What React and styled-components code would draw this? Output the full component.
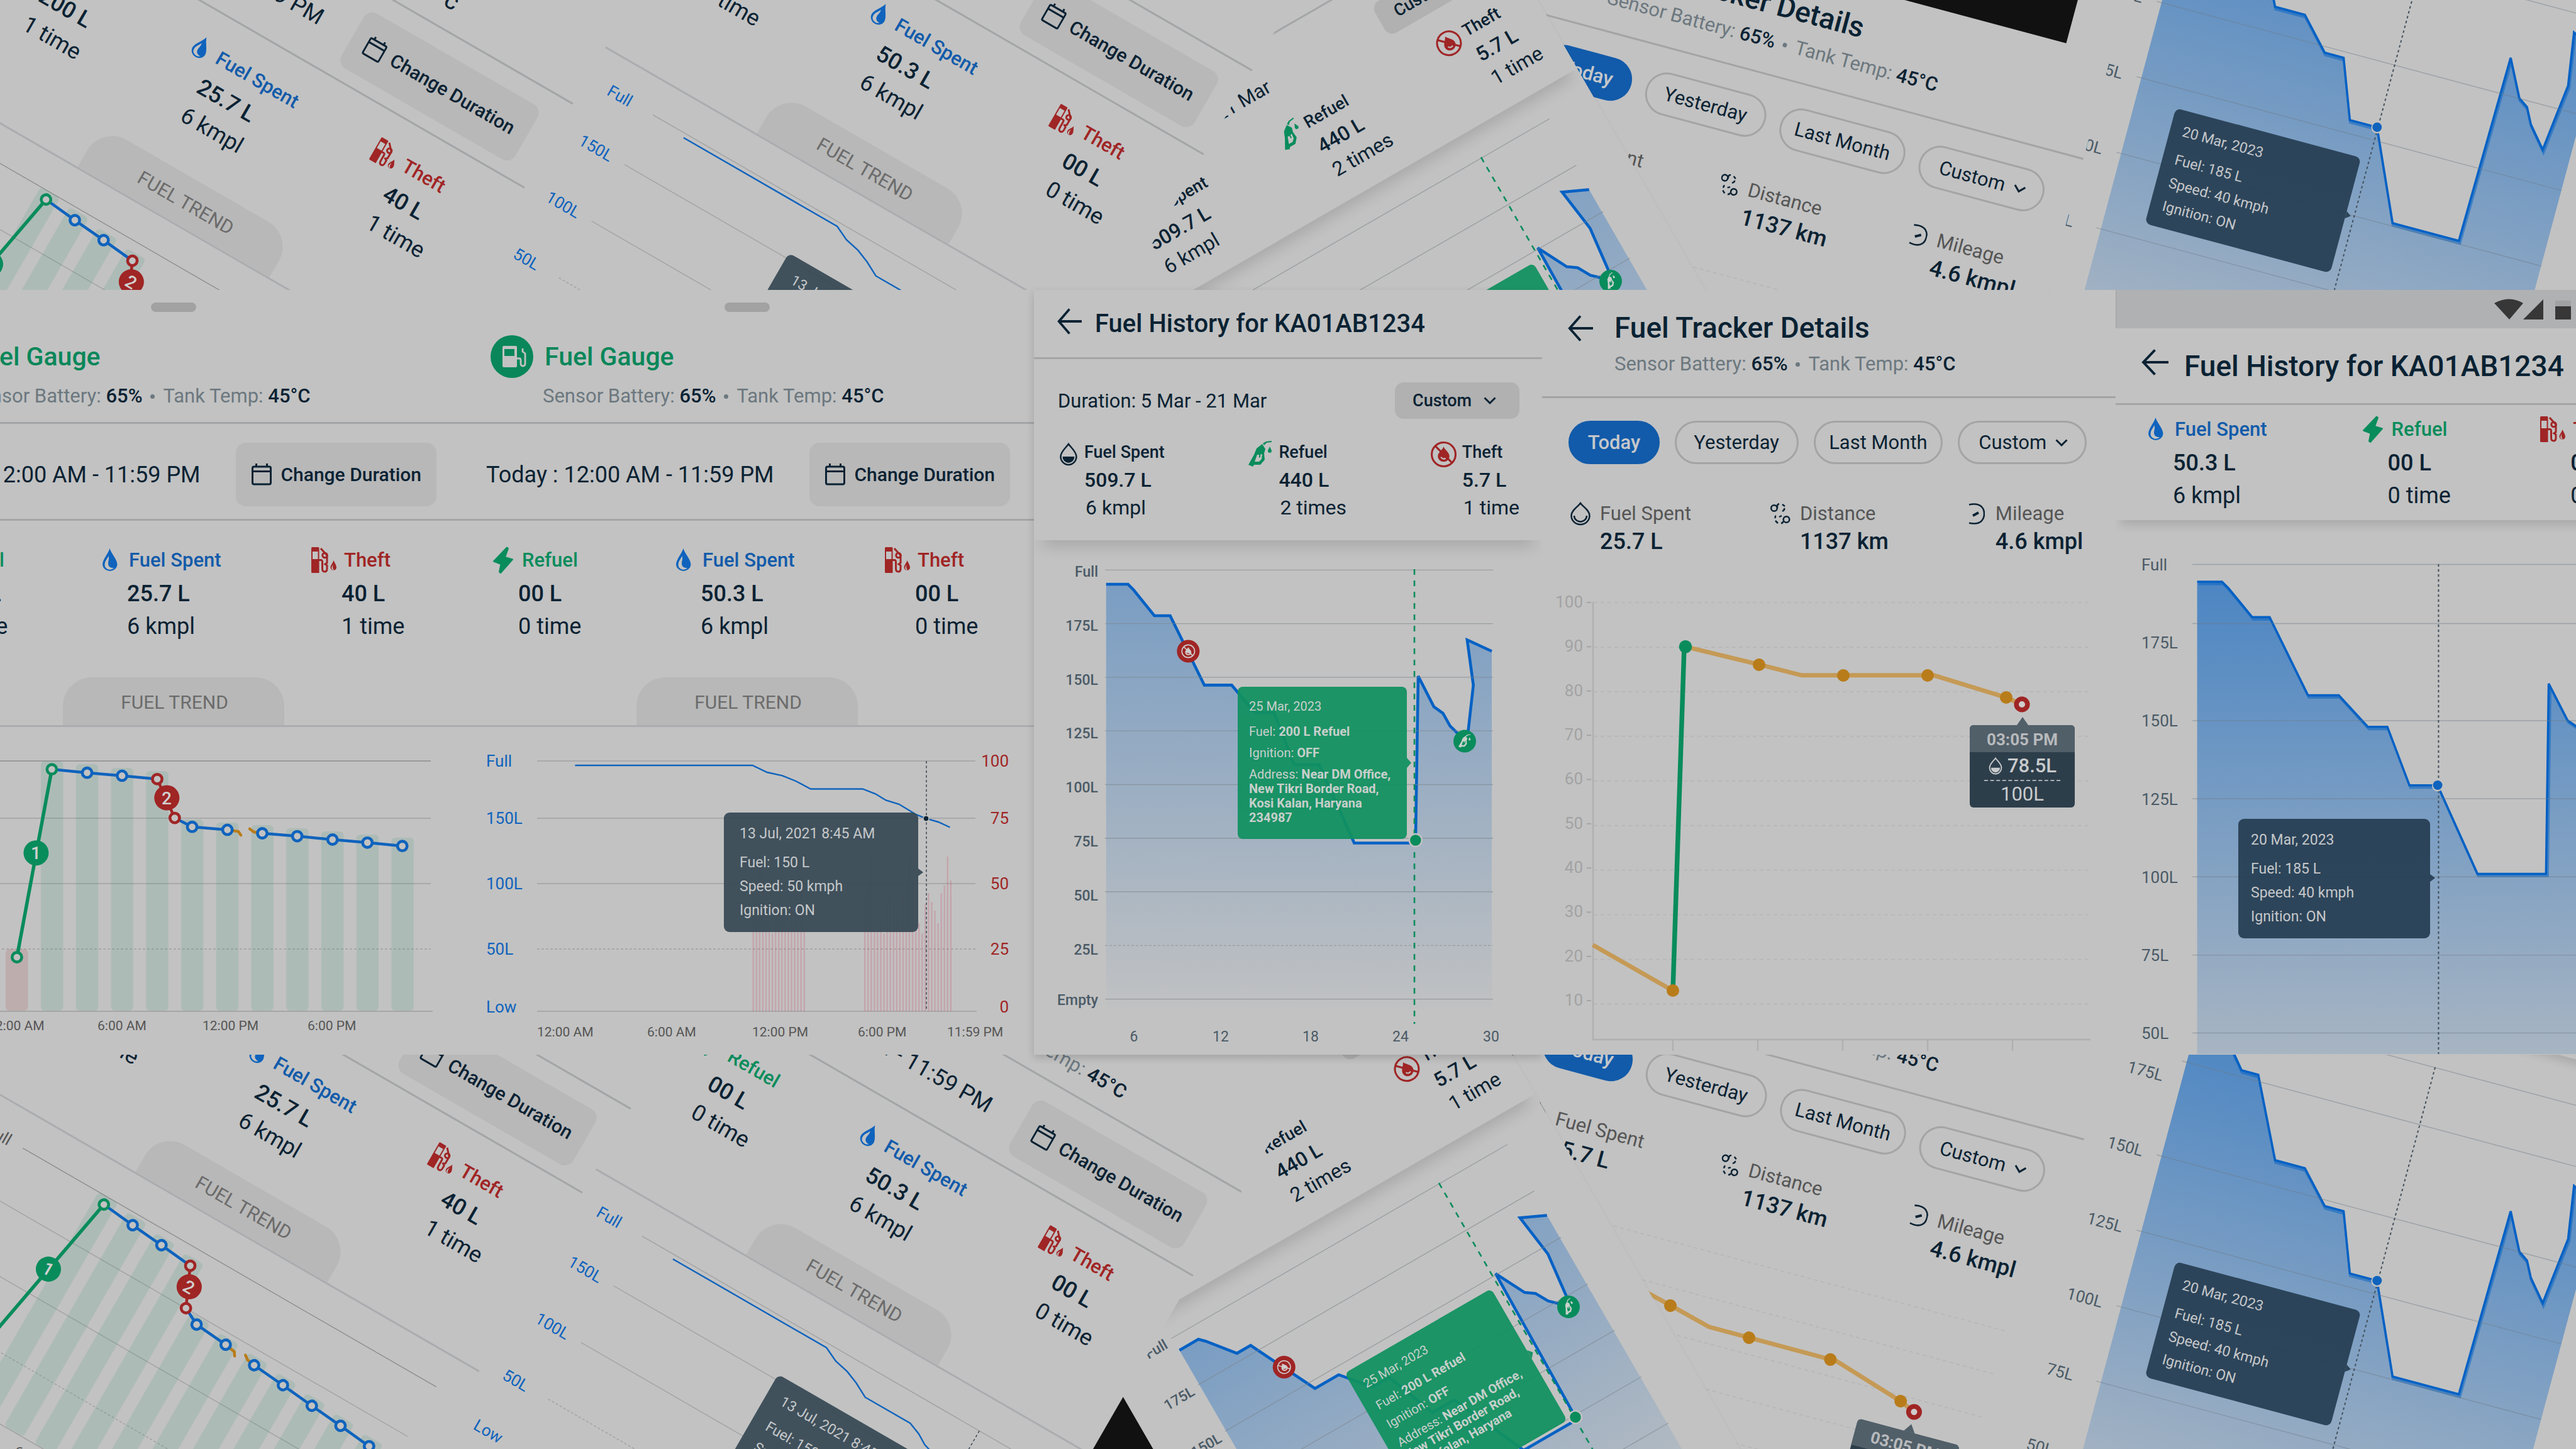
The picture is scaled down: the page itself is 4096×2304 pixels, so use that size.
import React from "react";
import styled, { createGlobalStyle, css } from "styled-components";

const c = {
  page: "#111111",
  card: "#c2c2c2",
  ink: "#0a2233",
  muted: "#6c787f",
  label: "#555555",
  blue: "#0f63bd",
  blueText: "#125baa",
  line: "#0461c4",
  green: "#098c5c",
  red: "#a02525",
  orange: "#b97c1a",
  axis: "#4a5a66",
  rule: "#a3a5a7",
};

const GlobalStyle = createGlobalStyle`
  * { box-sizing: border-box; }
  html, body { margin: 0; background: ${c.page}; }
  body {
    overflow: hidden;
    font-family: Roboto, "Liberation Sans", sans-serif;
    color: ${c.ink};
  }
  button, select {
    margin: 0;
    padding: 0;
    border: 0;
    background: none;
    color: inherit;
    font: inherit;
  }
  h2, p { margin: 0; font: inherit; }
  svg { display: block; flex: none; }
  svg text { font-family: Roboto, "Liberation Sans", sans-serif; }
`;

/* ---------- canvas ---------- */

const Board = styled.main`
  display: flex;
  flex-direction: column;
  width: 100%;
  min-height: 100vh;
  overflow: hidden;
  background: ${c.page};
`;

const Card = styled.article`
  display: flex;
  flex-direction: column;
  flex: none;
  width: ${(p) => (p.$narrow ? 808 : 912)}px;
  height: 1216px;
  overflow: hidden;
  background: ${c.card};
  ${(p) => p.$narrow && css`box-shadow: 0 0 5px rgba(0, 0, 0, 0.05);`}
`;

const Band = styled.section`
  position: relative;
  overflow: hidden;
  ${(p) => (p.$tall ? css`flex: 1;` : css`height: 461px; flex: none;`)}
`;

const Row = styled.section`
  position: relative;
  z-index: 1;
  display: flex;
  justify-content: center;
  flex: none;

  ${Card}:nth-child(3) { box-shadow: 0 5px 12px rgba(0, 0, 0, 0.16); }
`;

const Tilted = styled.div`
  position: absolute;
  left: ${(p) => p.$x}px;
  top: ${(p) => p.$y}px;
  transform-origin: 0 0;
  transform: rotate(${(p) => p.$angle}deg);
`;

/* ---------- shared parts ---------- */

const BackButton = styled.button`
  flex: none;
  padding-bottom: ${(p) => p.$lift || 0}px;
`;

const Title = styled.h2`
  font-size: ${(p) => p.$size}px;
  line-height: 50px;
  font-weight: 500;
  white-space: nowrap;
  color: ${(p) => p.$color || c.ink};
`;

const SensorLine = styled.p`
  display: flex;
  align-items: center;
  gap: 13px;
  font-size: 31px;
  line-height: 40px;
  white-space: nowrap;
  color: ${c.muted};

  b { font-weight: 500; color: ${c.ink}; }
  i { width: 7px; height: 7px; border-radius: 50%; background: ${c.muted}; }
`;

const Sensor = () => (
  <SensorLine>
    <span>Sensor Battery: <b>65%</b></span>
    <i />
    <span>Tank Temp: <b>45°C</b></span>
  </SensorLine>
);

const StatBox = styled.div`
  display: grid;
  grid-template-columns: ${(p) => p.$col}px auto;
  justify-content: start;
  white-space: nowrap;
`;
const StatIcon = styled.div`
  display: flex;
  align-items: center;
  height: ${(p) => p.$h || 46}px;
`;
const StatLabel = styled.div`
  font-size: ${(p) => p.$size || 31}px;
  line-height: ${(p) => p.$h || 46}px;
  font-weight: ${(p) => p.$weight || 500};
  color: ${(p) => p.$color || c.ink};
  padding-left: ${(p) => p.$inset || 0}px;
`;
const StatValue = styled.div`
  font-size: ${(p) => p.$size || 36}px;
  line-height: ${(p) => p.$h || 60}px;
  font-weight: 500;
`;
const StatNote = styled.div`
  font-size: ${(p) => p.$size || 36}px;
  line-height: 44px;
  padding-left: ${(p) => p.$inset || 0}px;
`;

const ChartBox = styled.div`
  position: relative;
  flex: 1;
`;

const Tip = styled.div`
  position: absolute;
  left: ${(p) => p.$x}px;
  top: ${(p) => p.$y}px;
  width: ${(p) => p.$w}px;
  padding: 15px ${(p) => p.$pad}px;
  border-radius: 9px;
  background: ${(p) => p.$bg};
  color: #c6c8ca;
  font-size: 23px;
  line-height: 38px;
  white-space: nowrap;

  p:first-child { margin-bottom: 8px; }
  &::after {
    content: "";
    position: absolute;
    left: 100%;
    top: ${(p) => p.$arrow}px;
    border: 6px solid transparent;
    border-left: 8px solid ${(p) => p.$bg};
    border-right: 0;
  }
`;

const RefuelTip = styled.div`
  position: absolute;
  left: 324px;
  top: 233px;
  display: flex;
  flex-direction: column;
  gap: 11px;
  width: 269px;
  padding: 20px 18px 22px;
  border-radius: 8px;
  background: rgba(17, 145, 96, 0.94);
  color: #c8cfcb;
  font-size: 20px;
  line-height: 23px;

  b { font-weight: 700; }
  p:first-child { margin-bottom: 6px; }
  &::after {
    content: "";
    position: absolute;
    left: 100%;
    top: 113px;
    border: 8px solid transparent;
    border-left: 7px solid rgba(17, 145, 96, 0.94);
    border-right: 0;
  }
`;

/* ---------- icons ---------- */

const BackArrow = ({ w }) => (
  <svg width={w} height="44" viewBox="0 0 42 44" preserveAspectRatio="none" fill="none" stroke={c.ink} strokeWidth="4">
    <path d="M42 22H4M21 2.500 3 22 21 41.500" />
  </svg>
);

const Chevron = () => (
  <svg width="20" height="14" viewBox="0 0 20 14" fill="none" stroke={c.ink} strokeWidth="3">
    <path d="M1.500 2.500 10 11l8.500-8.500" />
  </svg>
);

const Calendar = () => (
  <svg width="32" height="35" viewBox="0 0 32 35" fill="none" stroke={c.ink} strokeWidth="3">
    <rect x="1.500" y="5" width="29" height="28" rx="2.500" />
    <path d="M1.500 12.500h29M7.500 0v6M24.500 0v6" />
  </svg>
);

const Bolt = () => (
  <svg width="42" height="44" viewBox="-4 0 42 44" fill={c.green} stroke={c.green} strokeWidth="2" strokeLinejoin="round">
    <path d="M22 1.500 24 3 19 17l12 3.500L12 42l-2-1.500L12.500 28 1 23.500Z" />
  </svg>
);

const Drop = () => (
  <svg width="30" height="38" viewBox="-3 0 30 38" fill={c.blue}>
    <path
      fillRule="evenodd"
      d="M11.500 0C14 9 23.500 17 23.500 26a11.800 11 0 0 1-23.500 0C0 17 9 9 11.500 0ZM9.500 12C8 16.500 3.500 20 3.500 26a8.200 7.500 0 0 0 14.500 5c-5 .5-9-2-9-7 0-4 2-7 .5-12Z"
    />
  </svg>
);

const PumpLeak = () => (
  <svg width="43" height="42" viewBox="-3 0 43 42" fill={c.red}>
    <path fillRule="evenodd" d="M1.500 0H11a1.500 1.500 0 0 1 1.500 1.500V41H1.500A1.500 1.500 0 0 1 0 39.500v-38A1.500 1.500 0 0 1 1.500 0ZM2 7v12h8.500V7Z" />
    <g fill="none" stroke={c.red} strokeWidth="3">
      <path d="M12 20.500h3.500q2 0 2 3V34q0 5 3.800 5T25 34v-5l-3-2 3-2V13L15 2" />
      <circle cx="21.500" cy="13" r="3.700" />
    </g>
    <path fillRule="evenodd" d="M35.500 21c2 5 4.500 7.500 4.500 11.500a4.800 5 0 0 1-9.500 0c0-4 3.500-6.500 5-11.500ZM34.500 28c-2 3-2.500 4-2 6.500.5 1.500 2 2 3.500 1.500-2-1.500-2.500-4-1.500-8Z" />
  </svg>
);

const PumpDisc = () => (
  <svg width="68" height="68" viewBox="0 0 68 68">
    <circle cx="34" cy="34" r="34" fill="#09875a" />
    <path fill={c.card} fillRule="evenodd" d="M21 17h19q2 0 2 2v30q0 2-2 2H21q-2 0-2-2V19q0-2 2-2Zm1 5v11h16V22Z" />
    <path d="M42 37h4q2 0 2 3v5q0 4 3.500 4T55 45V29l-4-3v-5" fill="none" stroke={c.card} strokeWidth="2.800" strokeLinejoin="round" />
  </svg>
);

const HalfDrop = ({ color = c.ink, w = 28, h = 37 }) => (
  <svg width={w} height={h} viewBox="0 0 28 37" fill="none" stroke={color} strokeWidth="2.500">
    <path d="M14 2C10 8 1.500 14 1.500 22a12.500 13 0 0 0 25 0C26.500 14 18 8 14 2Z" />
    <path d="M4.500 22h19a9.500 10 0 0 1-19 0Z" fill={color} stroke="none" />
  </svg>
);

const SmileDrop = () => (
  <svg width="32" height="38" viewBox="0 0 32 38" fill="none" stroke={c.ink} strokeWidth="2.500">
    <path d="M16 2C12 8 1.500 13 1.500 22a14.500 14 0 0 0 29 0C30.500 13 20 8 16 2Z" />
    <path d="M6 22a10 9.500 0 0 0 20 0" />
  </svg>
);

const nozzle = (
  <>
    <path fillRule="evenodd" d="M0 38 9 22l4-10 9-7 5 8-2 7 1 10-7 8H9l-2 3ZM14 22l-4 11h7l4-4 1-8-3 1v4l-2 1v-5Z" />
    <path d="m23 4 5-3 9-1v2l-8 1-4 4ZM34 9c1 3 3 5 3 7a3 3 0 0 1-6 0c0-2 2-4 3-7Z" />
  </>
);

const Nozzle = () => (
  <svg width="38" height="42" viewBox="0 0 38 42" fill={c.green}>{nozzle}</svg>
);

const noFuel = (color, back) => (
  <>
    <circle cx="20" cy="20" r="18.500" fill="none" stroke={color} strokeWidth="3" />
    <path d="m7 7 26 26" stroke={color} strokeWidth="3" />
    <path d="M20 8c2 5 9 9 9 15a9 8.500 0 0 1-18 0c0-6 7-10 9-15Z" fill={color} />
    <path d="M16 24a4.500 4.500 0 0 0 7 2" fill="none" stroke={back} strokeWidth="2" />
  </>
);

const NoFuel = () => (
  <svg width="41" height="41" viewBox="0 0 40 40">{noFuel(c.red, c.card)}</svg>
);

const Route = () => (
  <svg width="32" height="34" viewBox="0 0 32 34" fill="none" stroke={c.ink} strokeWidth="2.500">
    <circle cx="6" cy="8" r="4.800" />
    <path d="M11 8V4q0-2 3-3M19 2l4 3M22 8q1 3-3 5M18 20l-4 2M9 20q-2 1-1 4M8 28l4 4M17 32q3 0 3-3" />
    <circle cx="25.500" cy="26" r="4.800" />
  </svg>
);

const Gauge = () => (
  <svg width="30" height="34" viewBox="-5 0 30 34" fill="none" stroke={c.ink} strokeWidth="2.600">
    <path d="M0 2.500q4-1 8-1c10 0 16 6 16 15.500S18 32.500 8 32.500q-4 0-8-1" />
    <path d="m6 20 9-5" strokeWidth="4" />
  </svg>
);

/* ---------- stats ---------- */

const kinds = {
  refuel: { label: "Refuel", color: c.green, col: 44, inset: 6, icon: <Bolt /> },
  spent: { label: "Fuel Spent", color: c.blueText, col: 42, inset: 3, icon: <Drop /> },
  theft: { label: "Theft", color: c.red, col: 51, inset: 4, icon: <PumpLeak /> },
};

function Stat({ kind, value, note }) {
  const k = kinds[kind];
  return (
    <StatBox $col={k.col}>
      <StatIcon>{k.icon}</StatIcon>
      <div>
        <StatLabel $color={k.color} $inset={k.inset}>{k.label}</StatLabel>
        <StatValue>{value}</StatValue>
        <StatNote>{note}</StatNote>
      </div>
    </StatBox>
  );
}

/* ---------- fuel gauge cards ---------- */

const Handle = styled.div`
  width: 72px;
  height: 15px;
  margin: 20px auto 37px;
  border-radius: 8px;
  background: #a2a2a2;
  flex: none;
`;
const GaugeHead = styled.header`
  padding: 0 48px 21px;
  border-bottom: 3px solid ${c.rule};

  ${SensorLine} { margin: 9px 0 0 83px; }
`;
const GaugeTitle = styled.div`
  display: flex;
  align-items: center;
  gap: 18px;
`;
const DurationRow = styled.div`
  display: flex;
  align-items: center;
  justify-content: space-between;
  padding: 30px 38px 20px 41px;
  border-bottom: 3px solid ${c.rule};
  font-size: 36px;
  white-space: nowrap;
`;
const ChangeButton = styled.button`
  display: flex;
  align-items: center;
  gap: 14px;
  height: 101px;
  padding: 0 24px 0 25px;
  border-radius: 16px;
  background: #b8b8b8;
  font-size: 30px;
  font-weight: 500;
`;
const GaugeStats = styled.div`
  display: grid;
  grid-template-columns: 292fr 332fr 240fr;
  padding: 40px 0 59px 48px;
`;
const TabRow = styled.div`
  display: flex;
  justify-content: center;
  border-bottom: 3px solid #abacaf;
`;
const Tab = styled.button`
  width: 352px;
  height: 76px;
  padding: 3px 0 0 3px;
  border-radius: 46px 46px 0 0;
  background: #b8b8b8;
  color: #6b6b6b;
  font-size: 30px;
`;

const gridY = [749, 840, 944, 1048];

function GaugeCard({ stats, children }) {
  return (
    <Card>
      <Handle />
      <GaugeHead>
        <GaugeTitle>
          <PumpDisc />
          <Title $size={41} $color="#09875a">Fuel Gauge</Title>
        </GaugeTitle>
        <Sensor />
      </GaugeHead>
      <DurationRow>
        <span>Today : 12:00 AM - 11:59 PM</span>
        <ChangeButton type="button"><Calendar />Change Duration</ChangeButton>
      </DurationRow>
      <GaugeStats>{stats.map((s) => <Stat key={s.kind} {...s} />)}</GaugeStats>
      <TabRow><Tab type="button">FUEL TREND</Tab></TabRow>
      <ChartBox>{children}</ChartBox>
    </Card>
  );
}

const barTops = [749, 754, 760, 765, 842, 847, 851, 856, 861, 866, 871];
const points = [
  [318.500, 767.700], [374, 772.400], [485.500, 853.700], [541.600, 858.400], [597, 864],
  [652.600, 868.600], [708.700, 874], [764.200, 878.800], [819.700, 884.200],
];

function EventsCard() {
  return (
    <GaugeCard
      stats={[
        { kind: "refuel", value: "200 L", note: "1 time" },
        { kind: "spent", value: "25.7 L", note: "6 kmpl" },
        { kind: "theft", value: "40 L", note: "1 time" },
      ]}
    >
      <svg width="912" height="521" viewBox="0 695 912 521">
        <g stroke="#9c9c9c" strokeWidth="1.300">
          {gridY.map((y, i) => (
            <path key={y} d={`M106 ${y}H865`} stroke={i ? "#a0a0a0" : "#8c8c8c"} strokeDasharray={i === 3 ? "4 3" : "none"} />
          ))}
          <path d="M106 1147H868" />
        </g>
        {barTops.map((y, i) => (
          <rect key={i} x={245 + i * 55.730} y={y} width="35.500" height={1146 - y} rx="6" fill="#098c5c" opacity="0.110" />
        ))}
        <rect x="189" y="1048" width="35.500" height="98" rx="6" fill="#a02525" opacity="0.130" />
        <g fill="none" strokeWidth="4.500">
          <path stroke={c.orange} d="M541 858.400 559 861l4 6M577 857l7 5 13 2" strokeLinecap="round" />
          <path stroke={c.blue} d="M262.400 762.200 318.500 767.700 374 772.400 430 777.800M457.800 839.600 485.500 853.700 541.600 858.400M597 864 652.600 868.600 708.700 874 764.200 878.800 819.700 884.200" />
          <path stroke={c.red} d="M430 777.800 457.800 839.600" />
          <path stroke={c.green} strokeWidth="5.500" d="M206.900 1061 262.400 762.200" />
        </g>
        <g fill={c.card} strokeWidth="4.600">
          {points.map(([x, y]) => <circle key={x} cx={x} cy={y} r="7.600" stroke={c.blue} />)}
          <circle cx="430" cy="777.800" r="7.600" stroke={c.red} />
          <circle cx="457.800" cy="839.600" r="7.600" stroke={c.red} />
          <circle cx="262.400" cy="762.200" r="7.600" stroke={c.green} />
          <circle cx="206.900" cy="1061" r="7.600" stroke={c.green} />
        </g>
        <circle cx="237.400" cy="895.200" r="20" fill={c.green} />
        <circle cx="445.300" cy="807.600" r="20" fill={c.red} />
        <g fill="#d0d0d0" fontSize="28" fontWeight="500" textAnchor="middle">
          <text x="237" y="905">1</text>
          <text x="445" y="818">2</text>
        </g>
        <g fontSize="26" fill={c.label}>
          <text x="42" y="758">Full</text>
          <text x="42" y="849">150L</text>
          <text x="42" y="953">100L</text>
          <text x="42" y="1057">50L</text>
          <text x="42" y="1149">Low</text>
        </g>
        <g fontSize="21" fill={c.label}>
          <text x="161" y="1177">12:00 AM</text>
          <text x="335" y="1177">6:00 AM</text>
          <text x="502" y="1177">12:00 PM</text>
          <text x="669" y="1177">6:00 PM</text>
        </g>
      </svg>
    </GaugeCard>
  );
}

const cycle = [188, 200, 246, 208, 188, 140, 124, 170, 188, 174, 160, 140];

function UsageCard() {
  return (
    <GaugeCard
      stats={[
        { kind: "refuel", value: "00 L", note: "0 time" },
        { kind: "spent", value: "50.3 L", note: "6 kmpl" },
        { kind: "theft", value: "00 L", note: "0 time" },
      ]}
    >
      <svg width="912" height="521" viewBox="0 695 912 521">
        <g stroke="#a0a0a0" strokeWidth="1.300">
          {gridY.map((y, i) => (
            <path key={y} d={`M122 ${y}H819`} strokeDasharray={i === 3 ? "4 3" : "none"} />
          ))}
          <path d="M122 1147H821" />
        </g>
        <g fill="#d0305a" opacity="0.200">
          {Array.from({ length: 17 }, (_, i) => (
            <rect key={i} x={464.600 + i * 5.060} y={1147 - (i > 15 ? 140 : cycle[i % 12])} width="2.400" height={i > 15 ? 140 : cycle[i % 12]} />
          ))}
          {Array.from({ length: 28 }, (_, i) => (
            <rect key={i} x={642 + i * 5.060} y={1147 - cycle[i % 12]} width="2.400" height={cycle[i % 12]} />
          ))}
        </g>
        <path
          d="M182.400 756H464.500L487.700 767 512 772.400 533.400 781 557 793.500H639.700L660 801.300 676.700 811.500 697.600 817.800 724.700 834.200 740.300 840.400 760 846 778.500 854.500"
          fill="none" stroke={c.blue} strokeWidth="2.400"
        />
        <path d="M741 749V1145" stroke="#3c4955" strokeWidth="1.500" strokeDasharray="4 3.500" />
        <circle cx="740.500" cy="840.500" r="4.500" fill={c.ink} stroke={c.card} strokeWidth="1.500" />
        <g fontSize="26" fill={c.blue}>
          <text x="41" y="758">Full</text>
          <text x="41" y="849">150L</text>
          <text x="41" y="953">100L</text>
          <text x="41" y="1057">50L</text>
          <text x="41" y="1149">Low</text>
        </g>
        <g fontSize="26" fill={c.red} textAnchor="end">
          <text x="872" y="758">100</text>
          <text x="872" y="849">75</text>
          <text x="872" y="953">50</text>
          <text x="872" y="1057">25</text>
          <text x="872" y="1149">0</text>
        </g>
        <g fontSize="21" fill={c.label}>
          <text x="122" y="1187">12:00 AM</text>
          <text x="297" y="1187">6:00 AM</text>
          <text x="464" y="1187">12:00 PM</text>
          <text x="632" y="1187">6:00 PM</text>
          <text x="774" y="1187">11:59 PM</text>
        </g>
      </svg>
      <Tip $x={419} $y={136} $w={309} $pad={25} $arrow={89} $bg="rgba(55, 73, 85, 0.94)">
        <p>13 Jul, 2021 8:45 AM</p>
        <p>Fuel: 150 L</p>
        <p>Speed: 50 kmph</p>
        <p>Ignition: ON</p>
      </Tip>
    </GaugeCard>
  );
}

/* ---------- fuel history, custom duration ---------- */

const TitleBar = styled.header`
  display: flex;
  align-items: center;
  height: ${(p) => p.$h}px;
  padding-left: ${(p) => p.$left}px;
  gap: ${(p) => p.$gap}px;
  border-bottom: 3px solid ${c.rule};
  flex: none;
`;
const HistoryPanel = styled.div`
  position: relative;
  padding: 37px 36px 30px 38px;
  background: ${c.card};
  box-shadow: 0 24px 22px -14px rgba(0, 0, 0, 0.13);
`;
const HistoryRow = styled.div`
  display: flex;
  align-items: center;
  justify-content: space-between;
  margin-bottom: 31px;
  font-size: 31px;
  white-space: nowrap;
`;
const HistoryStats = styled.div`
  display: flex;
  justify-content: space-between;
  padding-left: 3px;
`;
const Picker = styled.div`
  display: grid;
  align-items: center;
  justify-items: end;
  height: ${(p) => p.$h}px;
  width: ${(p) => p.$w || "auto"};
  border: ${(p) => (p.$outline ? "3px solid #a4a4a4" : "0")};
  border-radius: ${(p) => p.$radius}px;
  background: ${(p) => (p.$outline ? "none" : "#b1b1b1")};
  padding-right: ${(p) => (p.$outline ? 27 : 37)}px;

  select {
    grid-area: 1 / 1;
    justify-self: stretch;
    height: 100%;
    padding-left: ${(p) => (p.$outline ? 30 : 28)}px;
    appearance: none;
    outline: none;
    font-size: ${(p) => (p.$outline ? 31 : 27)}px;
    font-weight: ${(p) => (p.$outline ? 400 : 500)};
  }
  svg { grid-area: 1 / 1; pointer-events: none; }
`;

const CustomPicker = (props) => (
  <Picker {...props}>
    <select aria-label="Duration" defaultValue="custom">
      <option value="custom">Custom</option>
    </select>
    <Chevron />
  </Picker>
);

function HistoryStat({ icon, col, label, value, note }) {
  return (
    <StatBox $col={col}>
      <StatIcon $h={50}>{icon}</StatIcon>
      <div>
        <StatLabel $size={27} $h={44}>{label}</StatLabel>
        <StatValue $size={32} $h={44}>{value}</StatValue>
        <StatNote $size={32} $inset={2}>{note}</StatNote>
      </div>
    </StatBox>
  );
}

const historyLine =
  "M114.800 468H149.600L158.300 476.700 191.500 518H216.600L271 628.400H314.500L351.500 672.300H382L413.600 755H453.800L509.300 879.500H606.800L611 614 636 662.900 650.300 673 661.700 693.400 685 716 690 705.900 698.700 628.400 688.900 556.500 728 574.500";
const historyLabels = [
  ["Full", 456], ["175L", 542], ["150L", 628], ["125L", 713], ["100L", 799],
  ["75L", 885], ["50L", 971], ["25L", 1057], ["Empty", 1137],
];

function HistoryCard({ id }) {
  return (
    <Card $narrow>
      <TitleBar $h={110} $left={37} $gap={21}>
        <BackButton type="button" aria-label="Back" $lift={8}><BackArrow w={39} /></BackButton>
        <Title $size={40}>Fuel History for KA01AB1234</Title>
      </TitleBar>
      <HistoryPanel>
        <HistoryRow>
          <span>Duration: 5 Mar - 21 Mar</span>
          <CustomPicker $h={58} $w="198px" $radius={14} />
        </HistoryRow>
        <HistoryStats>
          <HistoryStat icon={<HalfDrop />} col={39} label="Fuel Spent" value="509.7 L" note="6 kmpl" />
          <HistoryStat icon={<Nozzle />} col={48} label="Refuel" value="440 L" note="2 times" />
          <HistoryStat icon={<NoFuel />} col={50} label="Theft" value="5.7 L" note="1 time" />
        </HistoryStats>
      </HistoryPanel>
      <ChartBox>
        <svg width="808" height="817" viewBox="0 398 808 817">
          <defs>
            <linearGradient id={`history-${id}`} x1="0" y1="468" x2="0" y2="1143" gradientUnits="userSpaceOnUse">
              <stop offset="0" stopColor={c.line} stopOpacity="0.380" />
              <stop offset="1" stopColor={c.line} stopOpacity="0.010" />
            </linearGradient>
          </defs>
          <path d={`${historyLine}V1143H114.800Z`} fill={`url(#history-${id})`} />
          <path d={historyLine} fill="none" stroke={c.line} strokeWidth="4.600" />
          <g stroke="#7d858c" strokeOpacity="0.600" strokeWidth="1.300">
            {historyLabels.map(([t], i) => (
              <path key={t} d={`M113 ${445.400 + i * 85.270}H730`} strokeDasharray={i === 7 ? "4 3" : "none"} />
            ))}
          </g>
          <path d="M605 444V1167" stroke={c.green} strokeWidth="2.600" strokeDasharray="9 9" />
          <circle cx="606.800" cy="875" r="10" fill={c.green} stroke={c.card} strokeWidth="2.500" />
          <circle cx="245.400" cy="574.500" r="18" fill={c.red} />
          <g transform="translate(234.400 563.500) scale(0.550)">{noFuel("#d0cccc", c.red)}</g>
          <circle cx="685" cy="717.600" r="18" fill={c.green} />
          <g transform="translate(675 706.500) scale(0.520)" fill="#c8d2cd">{nozzle}</g>
          <g fontSize="23" fontWeight="500" fill={c.axis} textAnchor="end">
            {historyLabels.map(([t, y]) => <text key={t} x="102" y={y}>{t}</text>)}
          </g>
          <g fontSize="23" fill={c.axis} textAnchor="middle">
            <text x="159" y="1195">6</text>
            <text x="297" y="1195">12</text>
            <text x="440" y="1195">18</text>
            <text x="583" y="1195">24</text>
            <text x="727" y="1195">30</text>
          </g>
        </svg>
        <RefuelTip>
          <p>25 Mar, 2023</p>
          <p>Fuel: <b>200 L Refuel</b></p>
          <p>Ignition: <b>OFF</b></p>
          <p>Address: <b>Near DM Office, New Tikri Border Road, Kosi Kalan, Haryana 234987</b></p>
        </RefuelTip>
      </ChartBox>
    </Card>
  );
}

/* ---------- fuel tracker details ---------- */

const TrackerHead = styled.header`
  display: flex;
  align-items: flex-start;
  gap: 34px;
  padding: 35px 41px 31px;
  border-bottom: 3px solid #a4a4a4;

  ${BackButton} { padding-top: 4px; }
  ${SensorLine} { margin-top: 13px; }
`;
const Pills = styled.div`
  display: grid;
  grid-template-columns: 145fr 197fr 206fr 205fr;
  gap: 24px;
  padding: 36px 46px 57px 42px;
`;
const Pill = styled.button`
  height: 69px;
  border-radius: 35px;
  border: 3px solid ${(p) => (p.$active ? "#125baa" : "#a4a4a4")};
  background: ${(p) => (p.$active ? "#125baa" : "none")};
  color: ${(p) => (p.$active ? "#c6c8ca" : c.ink)};
  font-size: 31px;
  font-weight: ${(p) => (p.$active ? 500 : 400)};
  white-space: nowrap;
`;
const TrackerStats = styled.div`
  display: grid;
  grid-template-columns: 319fr 312fr 239fr;
  padding: 0 0 18px 45px;
`;
const LevelTip = styled.div`
  position: absolute;
  left: 680px;
  top: 252px;
  width: 167px;
  border-radius: 6px;
  background: #2d3e4b;
  color: #c8cacc;
  text-align: center;
  font-size: 31px;

  &::before {
    content: "";
    position: absolute;
    left: 75px;
    bottom: 100%;
    border: 9px solid transparent;
    border-bottom: 13px solid #515f69;
    border-top: 0;
  }
`;
const LevelTime = styled.div`
  padding-top: 3px;
  border-radius: 6px 6px 0 0;
  background: #515f69;
  color: #b8babc;
  font-size: 26px;
  line-height: 40px;
  font-weight: 700;
`;
const LevelNow = styled.div`
  display: flex;
  align-items: center;
  justify-content: center;
  gap: 7px;
  margin: 0 23px;
  border-bottom: 2px dashed #a9adb0;
  line-height: 44px;
  font-weight: 500;
`;
const LevelMax = styled.div`
  line-height: 42px;
`;

function TrackerStat({ icon, label, value }) {
  return (
    <StatBox $col={47}>
      <StatIcon $h={44}>{icon}</StatIcon>
      <div>
        <StatLabel $h={44} $weight={400} $color={c.label}>{label}</StatLabel>
        <StatValue $h={44}>{value}</StatValue>
      </div>
    </StatBox>
  );
}

const levels = [100, 90, 80, 70, 60, 50, 40, 30, 20, 10];

function TrackerCard() {
  return (
    <Card>
      <TrackerHead>
        <BackButton type="button" aria-label="Back"><BackArrow w={40} /></BackButton>
        <div>
          <Title $size={46}>Fuel Tracker Details</Title>
          <Sensor />
        </div>
      </TrackerHead>
      <Pills>
        <Pill type="button" $active>Today</Pill>
        <Pill type="button">Yesterday</Pill>
        <Pill type="button">Last Month</Pill>
        <CustomPicker $h={69} $radius={35} $outline />
      </Pills>
      <TrackerStats>
        <TrackerStat icon={<SmileDrop />} label="Fuel Spent" value="25.7 L" />
        <TrackerStat icon={<Route />} label="Distance" value="1137 km" />
        <TrackerStat icon={<Gauge />} label="Mileage" value="4.6 kmpl" />
      </TrackerStats>
      <ChartBox>
        <svg width="912" height="776" viewBox="0 440 912 776">
          <g stroke="#b8b8b8" strokeWidth="2" strokeDasharray="6 5">
            {levels.map((n, i) => <path key={n} d={`M82 ${497 + i * 70.930}H872`} />)}
          </g>
          <g stroke="#b0b0b0" strokeWidth="2.500">
            <path d="M81 496V1192H872" fill="none" />
            {[208, 343, 478, 613, 748].map((x) => <path key={x} d={`M${x} 1192V1210`} />)}
          </g>
          <g stroke="#a4a4a4" strokeWidth="2">
            {levels.map((n, i) => <path key={n} d={`M71 ${497 + i * 70.350}H78`} />)}
          </g>
          <g fontSize="26" fill="#a2a2a2" textAnchor="end">
            {levels.map((n, i) => <text key={n} x="65" y={Math.round(505 + i * 70.350)}>{n}</text>)}
          </g>
          <g fill="none" stroke="#c59a56" strokeWidth="7">
            <path d="M80.700 1041.500 208 1114.200" />
            <path d="M228.200 567.400 345.200 595.600 413 612.800H623L737.600 648 763 659" />
          </g>
          <path d="M208 1114 226 568" stroke={c.green} strokeWidth="7.500" />
          <g fill={c.orange}>
            {[[208, 1114], [345, 596], [479, 613], [613, 613], [738, 648]].map(([x, y]) => <circle key={x} cx={x} cy={y} r="10" />)}
          </g>
          <circle cx="228" cy="567.400" r="10.300" fill={c.green} />
          <circle cx="763" cy="659" r="8.800" fill="#d0cccc" stroke={c.red} strokeWidth="7.500" />
        </svg>
        <LevelTip>
          <LevelTime>03:05 PM</LevelTime>
          <LevelNow><HalfDrop color="#c8cacc" w={24} h={28} />78.5L</LevelNow>
          <LevelMax>100L</LevelMax>
        </LevelTip>
      </ChartBox>
    </Card>
  );
}

/* ---------- fuel history, live ---------- */

const StatusBar = styled.div`
  display: flex;
  justify-content: flex-end;
  align-items: center;
  height: 61px;
  padding-right: 188px;
  border-left: 1px solid #a0a0a0;
  background: #b0b1b3;
  flex: none;
`;
const LivePanel = styled.div`
  position: relative;
  padding: 16px 0 17px 49px;
  display: grid;
  grid-template-columns: 340fr 284fr 240fr;
  background: ${c.card};
  box-shadow: 0 16px 14px -8px rgba(0, 0, 0, 0.12);
`;

const liveLine =
  "M129.600 465H169.100L179.100 475 217.200 521.300H244.800L305.800 645.600H354.800L401 695.700H432L467.200 788.800H512L575.300 929.600H684.400L688.600 627 718.600 685.500 734 696 747 721 775.600 755 788.300 646 775.500 562 821 584";

function LiveCard({ id }) {
  return (
    <Card>
      <StatusBar>
        <svg width="122" height="34" viewBox="0 0 122 34" fill="#373737">
          <path d="M0 7Q24-6 46 7L24 33ZM78 1V33H46Z" />
          <path d="M97 12h25v21H97Z" />
          <path d="M97 3h25v9H97Z" opacity="0.120" />
        </svg>
      </StatusBar>
      <TitleBar $h={122} $left={41} $gap={25}>
        <BackButton type="button" aria-label="Back" $lift={12}><BackArrow w={43} /></BackButton>
        <Title $size={46}>Fuel History for KA01AB1234</Title>
      </TitleBar>
      <LivePanel>
        <Stat kind="spent" value="50.3 L" note="6 kmpl" />
        <Stat kind="refuel" value="00 L" note="0 time" />
        <Stat kind="theft" value="00 L" note="0 time" />
      </LivePanel>
      <ChartBox>
        <svg width="912" height="849" viewBox="0 367 912 849">
          <defs>
            <linearGradient id={`live-${id}`} x1="0" y1="465" x2="0" y2="1216" gradientUnits="userSpaceOnUse">
              <stop offset="0" stopColor={c.line} stopOpacity="0.620" />
              <stop offset="1" stopColor={c.line} stopOpacity="0.140" />
            </linearGradient>
            <clipPath id={`live-area-${id}`}><path d={`${liveLine}V1216H129.600Z`} /></clipPath>
          </defs>
          <path d={`${liveLine}V1216H129.600Z`} fill={`url(#live-${id})`} />
          <g clipPath={`url(#live-area-${id})`}>
            <path d={liveLine} transform="translate(2 3)" fill="none" stroke={c.line} strokeOpacity="0.500" strokeWidth="5" />
          </g>
          <path d={liveLine} fill="none" stroke={c.line} strokeWidth="3.600" />
          <g stroke="#6f7b86" strokeOpacity="0.450" strokeWidth="1.400">
            {[437.500, 531.500, 686, 810, 934.300, 1058.600, 1182.500].map((y) => <path key={y} d={`M122 ${y}H821`} />)}
          </g>
          <path d="M513.400 437V1216" stroke="#44525e" strokeWidth="2" strokeDasharray="4 4" />
          <circle cx="512" cy="789.500" r="9" fill={c.card} />
          <circle cx="512" cy="788.500" r="7.500" fill={c.blue} />
          <g fontSize="26" fill={c.axis}>
            {["Full", "175L", "150L", "125L", "100L", "75L", "50L"].map((t, i) => (
              <text key={t} x="41" y={Math.round(447 + i * 124.200)}>{t}</text>
            ))}
          </g>
        </svg>
        <Tip $x={195} $y={475} $w={305} $pad={20} $arrow={88} $bg="rgba(38, 61, 82, 0.93)">
          <p>20 Mar, 2023</p>
          <p>Fuel: 185 L</p>
          <p>Speed: 40 kmph</p>
          <p>Ignition: ON</p>
        </Tip>
      </ChartBox>
    </Card>
  );
}

/* ---------- board ---------- */

export default function App() {
  return (
    <>
      <GlobalStyle />
      <Board>
        <Band>
          <Tilted $x={3489} $y={-691} $angle={15}><LiveCard id="top" /></Tilted>
          <Tilted $x={2476} $y={-148} $angle={15}><TrackerCard /></Tilted>
          <Tilted $x={1609} $y={168} $angle={-30}><HistoryCard id="top" /></Tilted>
          <Tilted $x={1307} $y={-527} $angle={30}><UsageCard /></Tilted>
          <Tilted $x={227} $y={-474} $angle={30}><EventsCard /></Tilted>
        </Band>
        <Row>
          <EventsCard />
          <UsageCard />
          <HistoryCard id="mid" />
          <TrackerCard />
          <LiveCard id="mid" />
        </Row>
        <Band $tall>
          <Tilted $x={3489} $y={-534} $angle={15}><LiveCard id="low" /></Tilted>
          <Tilted $x={2477} $y={-266} $angle={15}><TrackerCard /></Tilted>
          <Tilted $x={1542} $y={122} $angle={-30}><HistoryCard id="low" /></Tilted>
          <Tilted $x={1290} $y={-421} $angle={30}><UsageCard /></Tilted>
          <Tilted $x={319} $y={-553} $angle={30}><EventsCard /></Tilted>
        </Band>
      </Board>
    </>
  );
}
